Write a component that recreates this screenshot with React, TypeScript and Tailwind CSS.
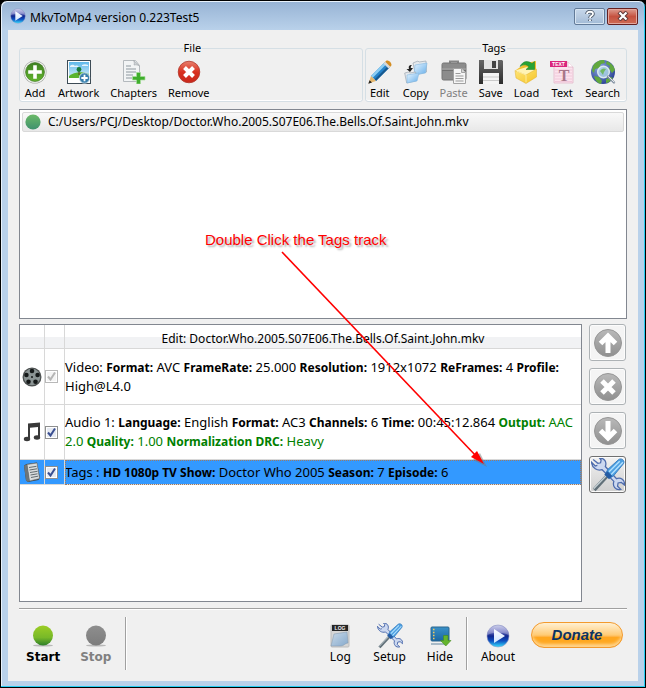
import { useState } from "react"
import type { ReactNode } from "react"

const MOVIE = "Doctor.Who.2005.S07E06.The.Bells.Of.Saint.John.mkv"

function LogoIcon({ size = 24 }: { size?: number }) {
  return (
    <svg width={size} height={size} viewBox="0 0 24 24" aria-hidden="true">
      <defs>
        <linearGradient id="logo" x1="0" y1="0" x2="0" y2="1">
          <stop offset="0" stopColor="#b9bde4" />
          <stop offset=".3" stopColor="#6a6fc0" />
          <stop offset=".5" stopColor="#11278e" />
          <stop offset=".72" stopColor="#0d4fc0" />
          <stop offset="1" stopColor="#35e0ff" />
        </linearGradient>
        <linearGradient id="logoPlay" x1="0" y1="0" x2="0" y2="1">
          <stop offset="0" stopColor="#fff" />
          <stop offset="1" stopColor="#cfe4ff" />
        </linearGradient>
      </defs>
      <circle cx="12" cy="12" r="11" fill="url(#logo)" stroke="#8f96c4" strokeWidth=".6" />
      <path d="M1.5 11C2 5 7 1.5 12 1.5S22 5 22.500 11C17 8 7 8 1.500 11Z" fill="#fff" opacity=".28" />
      <path d="M8 5v14L19 12Z" fill="url(#logoPlay)" />
    </svg>
  )
}

function AddIcon() {
  return (
    <svg width="24" height="24" viewBox="0 0 24 24" aria-hidden="true">
      <defs>
        <linearGradient id="add" x1="0" y1="0" x2="0" y2="1">
          <stop offset="0" stopColor="#3f8022" />
          <stop offset="1" stopColor="#62b52d" />
        </linearGradient>
      </defs>
      <circle cx="12" cy="12" r="11.500" fill="#a5a8a3" />
      <circle cx="12" cy="12" r="10.800" fill="#f5f7f4" />
      <circle cx="12" cy="12" r="9.500" fill="url(#add)" stroke="#3a6d20" strokeWidth=".6" />
      <path d="M10.200 5.200h3.600v5h5v3.600h-5v5h-3.600v-5h-5v-3.600h5Z" fill="#fff" />
    </svg>
  )
}

function ArtworkIcon() {
  return (
    <svg width="24" height="24" viewBox="0 0 24 24" aria-hidden="true">
      <defs>
        <linearGradient id="sky" x1="0" y1="0" x2="0" y2="1">
          <stop offset="0" stopColor="#5fb8ea" />
          <stop offset="1" stopColor="#d5f0fa" />
        </linearGradient>
      </defs>
      <rect x=".5" y=".5" width="23" height="23" fill="#fff" stroke="#3d4b55" />
      <rect x="2" y="2" width="20" height="16" fill="url(#sky)" />
      <path d="M3 6c2-2 4-1 5 0 2-1 3 0 4 1H3ZM15 5c2-1 4-1 6 0v1h-6Z" fill="#fff" opacity=".8" />
      <path d="M2 16c4-4 14-5 20-2v4H2Z" fill="#5ab42f" />
      <path d="M12 10v5" stroke="#5c4420" />
      <circle cx="12" cy="9.500" r="2.400" fill="#187c3a" />
      <circle cx="17.500" cy="18" r="5.200" fill="#397fac" stroke="#dcecf5" strokeWidth=".8" />
      <path d="M17.500 14.800v6.400M14.300 18h6.400" stroke="#fff" strokeWidth="1.800" />
    </svg>
  )
}

function ChaptersIcon() {
  return (
    <svg width="24" height="24" viewBox="0 0 24 24" aria-hidden="true">
      <path d="M1.500.500h12l4 5V21.500h-16Z" fill="#f2f4f5" stroke="#b4b9bd" />
      <path d="M11.500.500c1 2 1 3 .500 4.500 2-.500 4 0 5.500 1Z" fill="#cfd4d7" stroke="#9fa5a9" strokeWidth=".6" />
      <path d="M4 6h5M4 9h10M4 12h10M4 15h7M4 18h6" stroke="#8d989f" strokeWidth="1.200" />
      <path d="M14.500 12.500h4v4h4.500v3.500h-4.500v4h-4v-4h-4v-3.500h4Z" fill="#3fae2c" stroke="#a8dd9c" strokeWidth=".7" />
    </svg>
  )
}

function RemoveIcon() {
  return (
    <svg width="24" height="24" viewBox="0 0 24 24" aria-hidden="true">
      <defs>
        <linearGradient id="remove" x1="0" y1="0" x2="0" y2="1">
          <stop offset="0" stopColor="#e8816f" />
          <stop offset=".5" stopColor="#d8301f" />
          <stop offset="1" stopColor="#c9281b" />
        </linearGradient>
      </defs>
      <circle cx="12" cy="12" r="10.800" fill="url(#remove)" stroke="#b1392d" strokeWidth=".8" />
      <path d="m7.500 7.500 9 9m0-9-9 9" stroke="#fff" strokeWidth="4" />
    </svg>
  )
}

function EditIcon() {
  return (
    <svg width="24" height="24" viewBox="0 0 24 24" aria-hidden="true">
      <path d="M3 16 16.500 2.500l5 5L8 21Z" fill="#2583c9" />
      <path d="M3 16 16.500 2.500l1.800 1.800L4.800 17.800Z" fill="#8ccdf3" />
      <path d="m6.500 19.500 13.500-13.500 1.500 1.500L8 21Z" fill="#17598f" />
      <path d="m16.500 2.500 1.500-1.500c2-2 7 2.500 5 5l-1.500 1.500Z" fill="#d48d22" />
      <path d="m15.500 3.500 1.800-1.800 5 5-1.800 1.800Z" fill="#d5d8dc" />
      <path d="M3 16 .5 23.500 8 21Z" fill="#e5b86f" />
      <path d="m1.600 20.200-1.300 3.500 3.700-1.200Z" fill="#222" />
    </svg>
  )
}

function CopyIcon() {
  return (
    <svg width="24" height="24" viewBox="0 0 24 24" aria-hidden="true">
      <defs>
        <linearGradient id="copy" x1="0" y1="0" x2="1" y2="1">
          <stop offset="0" stopColor="#e8f5ff" />
          <stop offset="1" stopColor="#65aeea" />
        </linearGradient>
      </defs>
      <path d="m9 3 5-2 1 1 7-1 .500 11-11 3Z" fill="#e5e9ed" stroke="#9ca6b0" strokeWidth=".7" />
      <path d="m11 5 12-2-1.500 10L10 15Z" fill="url(#copy)" stroke="#85b9e0" strokeWidth=".6" />
      <path d="m.7 13 4-1 1 1 6-1v9l-9 2Z" fill="#e5e9ed" stroke="#9ca6b0" strokeWidth=".7" />
      <path d="m3 15 12-2-2 8-10 2Z" fill="url(#copy)" stroke="#85b9e0" strokeWidth=".6" />
      <path d="M8 5C4.500 5 4.500 7 5 9H2.500L6 12l3-4H6.800c0-1 0-2 1.200-3Z" fill="#222" />
    </svg>
  )
}

function PasteIcon() {
  return (
    <svg width="26" height="24" viewBox="0 0 26 24" aria-hidden="true">
      <path d="M9 4V1.500h8V4" fill="none" stroke="#858585" strokeWidth="2" />
      <rect x="1" y="3" width="24" height="17" rx="1.500" fill="#8c8c8c" stroke="#757575" />
      <path d="M1 9h24" stroke="#a9a9a9" />
      <path d="M1 10.500h24" stroke="#707070" />
      <path d="M12.500 8.500h8l4 4v11h-12Z" fill="#f6f6f6" stroke="#a2a2a2" />
      <path d="M20.500 8.500v4h4" fill="#d5d5d5" stroke="#a2a2a2" />
      <path d="M14.500 13.500h5M14.500 16h8M14.500 18.500h8M14.500 21h8" stroke="#999" />
    </svg>
  )
}

function SaveIcon() {
  return (
    <svg width="24" height="24" viewBox="0 0 24 24" aria-hidden="true">
      <defs>
        <linearGradient id="save" x1="0" y1="0" x2="0" y2="1">
          <stop offset="0" stopColor="#666" />
          <stop offset="1" stopColor="#2c2c2c" />
        </linearGradient>
      </defs>
      <path d="M0 0h23l1 1v23H0Z" fill="url(#save)" />
      <rect x="5" y="0" width="14" height="9" fill="#e3e3e3" />
      <rect x="13" y="1" width="4" height="7" fill="#444" />
      <rect x="4" y="13" width="16" height="11" fill="#f4f4f4" />
      <path d="M4 17h16M4 20.500h16" stroke="#c9c9c9" />
    </svg>
  )
}

function LoadIcon() {
  return (
    <svg width="24" height="24" viewBox="0 0 24 24" aria-hidden="true">
      <defs>
        <linearGradient id="load" x1="0" y1="0" x2="1" y2="1">
          <stop offset="0" stopColor="#ffe67a" />
          <stop offset="1" stopColor="#f5c426" />
        </linearGradient>
      </defs>
      <path d="M2 10 12 3l10-2v13l-9 8Z" fill="#f0c02c" />
      <path d="M1 10.500 13 7l9 3-3 9-7 3Z" fill="#fff3b5" />
      <path d="m1 10.500 11 4.500L22.500 9v8L12 23.500 2 18Z" fill="url(#load)" stroke="#e3b02c" strokeWidth=".5" />
      <path d="m3 11.300 9 3.700v7.500" fill="none" stroke="#fff3b0" strokeWidth=".8" />
      <path d="M6 6.500C9 .5 14 .5 18 3.500l2.500-2v8H12l3-2.800C12 4 9 4.500 6 6.500Z" fill="#27a334" stroke="#137824" strokeWidth=".5" />
    </svg>
  )
}

function TextIcon() {
  return (
    <svg width="24" height="24" viewBox="0 0 24 24" aria-hidden="true">
      <path d="M4 2h14l5 5v16H4Z" fill="#fbe3ed" stroke="#e3b6c9" strokeWidth=".8" />
      <path d="M5 10h17M5 13h17M5 16h17M5 19h17M5 21.500h17" stroke="#eec3d5" strokeWidth=".8" />
      <path d="M18 2v5h5" fill="#fff" stroke="#dcaec2" strokeWidth=".7" />
      <rect x="0" y="1" width="17" height="6" fill="#da257d" />
      <text x="8.500" y="6" textAnchor="middle" fontFamily="Liberation Sans" fontSize="5" fontWeight="700" fill="#fff">TEXT</text>
      <text x="14" y="21" textAnchor="middle" fontFamily="Liberation Serif" fontSize="16" fontWeight="700" fill="#a87689">T</text>
    </svg>
  )
}

function SearchIcon() {
  return (
    <svg width="26" height="26" viewBox="0 0 26 26" aria-hidden="true">
      <defs>
        <radialGradient id="globe" cx=".4" cy=".35" r=".7">
          <stop offset="0" stopColor="#8facdf" />
          <stop offset="1" stopColor="#263d91" />
        </radialGradient>
      </defs>
      <circle cx="13" cy="13" r="12" fill="url(#globe)" />
      <path d="M3 7c3-5 7-6 11-6l1 3-4 1-2 4-4 1-1 4-2-2ZM17 2c4 2 7 5 8 9l-3 3-3-4 1-3-4-2ZM4 17l5 1 3 4-1 3c-4-1-6-4-7-8ZM16 20l5-2 2 1c-2 3-5 5-7 5Z" fill="#61a83e" />
      <circle cx="13.500" cy="13" r="5.800" fill="#b4dbe9" fillOpacity=".75" stroke="#dbe9ef" strokeWidth="1.400" />
      <path d="M10 12c2-3 4-3 6-2l-2 3-1 3Z" fill="#72b867" />
      <path d="m18 17.500 6 6" stroke="#8492a2" strokeWidth="2.400" strokeLinecap="round" />
      <path d="m18.500 17.500 5.500 5.500" stroke="#e0e5ea" strokeLinecap="round" />
    </svg>
  )
}

function ToolsIcon({ size = 26 }: { size?: number }) {
  return (
    <svg width={size} height={size} viewBox="0 0 32 32" aria-hidden="true">
      <path
        d="M2 1.500 6.500 5 9 4.500 9.500 2 8 0c5 0 7 4 5.500 8L24 19.500c4-1.500 8 1 7.500 6L28.500 23l-3 .500-.500 3 3 3c-5 1-8-3-6.500-7.500L10.500 11C6 12.500 1 9.500.500 4L4 7.500l2-.500"
        fill="#ccd8f0"
        stroke="#4e6cad"
        strokeWidth="1.200"
      />
      <path d="M3 30 15.500 16.500" stroke="#617079" strokeWidth="3.500" />
      <path d="m2.500 29 12-12.500" stroke="#c5d0d4" strokeWidth="1.200" />
      <path d="m14 14 4.500 4.500 3-2 9-11c2-3-2-6-4.500-4l-10 9Z" fill="#4d9fe0" stroke="#2e77bd" strokeWidth=".8" />
      <path d="m17 13 10-10M19 15.500 30 4" stroke="#b3e1ff" strokeWidth="1.300" />
      <path d="m12.500 15.500 4.500 4.500 3-3-4.500-4.500Z" fill="#245ca4" />
    </svg>
  )
}

function LogIcon() {
  return (
    <svg width="24" height="24" viewBox="0 0 24 24" aria-hidden="true">
      <defs>
        <linearGradient id="log" x1="0" y1="0" x2="1" y2="1">
          <stop offset="0" stopColor="#c9d9e8" />
          <stop offset="1" stopColor="#86aacd" />
        </linearGradient>
      </defs>
      <rect x="3" y="1" width="18" height="22" rx="1" fill="#d6d6d6" stroke="#bcbcbc" />
      <rect x="4" y="1" width="16" height="6" fill="#262626" />
      <text x="12" y="6" textAnchor="middle" fontFamily="Liberation Sans" fontSize="5" fontWeight="700" fill="#eee">LOG</text>
      <path d="m6 10 13-2 1 11c-3 0-4 3-7 3H3Z" fill="url(#log)" stroke="#8097ad" strokeWidth=".5" />
    </svg>
  )
}

function HideIcon() {
  return (
    <svg width="24" height="24" viewBox="0 0 24 24" aria-hidden="true">
      <defs>
        <linearGradient id="hide" x1="0" y1="0" x2="0" y2="1">
          <stop offset="0" stopColor="#3a91c8" />
          <stop offset="1" stopColor="#1b66a1" />
        </linearGradient>
      </defs>
      <rect x="3" y="3" width="18" height="14" rx="1" fill="url(#hide)" stroke="#2a668f" />
      <path d="M5 5.500h1.500M5 8.500h1.500M5 11.500h1.500M5 14.500h1.500" stroke="#f5c95c" strokeWidth="1.400" />
      <path d="M3 20h15" stroke="#a8bac7" strokeWidth="2" />
      <path d="M15.500 11.500h4.500v5h3L17.800 22l-5.300-5.500h3Z" fill="#64b42c" stroke="#438b1b" strokeWidth=".6" />
    </svg>
  )
}

function BallIcon({ on }: { on: boolean }) {
  return (
    <svg width="24" height="22" viewBox="0 0 24 22" aria-hidden="true">
      <defs>
        <linearGradient id="ballOn" x1="0" y1="0" x2="0" y2="1">
          <stop offset="0" stopColor="#9ccd25" />
          <stop offset=".6" stopColor="#78b928" />
          <stop offset="1" stopColor="#2e7e2a" />
        </linearGradient>
        <linearGradient id="ballOff" x1="0" y1="0" x2="0" y2="1">
          <stop offset="0" stopColor="#8e8e8e" />
          <stop offset="1" stopColor="#7c7c7c" />
        </linearGradient>
      </defs>
      <ellipse cx="12" cy="20.500" rx="10" ry="1" fill="#b9b9b9" />
      <circle cx="12" cy="10.500" r="10" fill={on ? "url(#ballOn)" : "url(#ballOff)"} />
    </svg>
  )
}

function ReelIcon() {
  return (
    <svg width="20" height="20" viewBox="0 0 20 20" aria-hidden="true">
      <circle cx="10" cy="10" r="9.500" fill="#4c5050" />
      <circle cx="10" cy="10" r="8.200" fill="#8b9494" />
      <g fill="#151919">
        <circle cx="10" cy="4" r="2.300" />
        <circle cx="15.600" cy="8" r="2.300" />
        <circle cx="13.500" cy="14.700" r="2.300" />
        <circle cx="6.500" cy="14.700" r="2.300" />
        <circle cx="4.400" cy="8" r="2.300" />
        <circle cx="10" cy="10" r="1" />
      </g>
    </svg>
  )
}

function NoteIcon() {
  return (
    <svg width="18" height="20" viewBox="0 0 18 20" aria-hidden="true">
      <path d="M5 1.500 17 .5v15h-2V5L7 5.800V17.500H5Z" fill="#393939" />
      <ellipse cx="4" cy="17" rx="3.200" ry="2.200" fill="#393939" />
      <ellipse cx="14" cy="15.500" rx="3.200" ry="2.200" fill="#393939" />
    </svg>
  )
}

function TagsIcon() {
  return (
    <svg width="18" height="20" viewBox="0 0 18 20" aria-hidden="true">
      <path d="M1 3.500 3.500 2 14 .5l3 15.500-1.500 2L5 20l-2-1.500Z" fill="#3b4246" />
      <path d="m4 2.500 10-1.500L16.500 16.500 6.500 19Z" fill="#d9dcdd" stroke="#6e7679" strokeWidth=".6" />
      <path d="m6 5.500 7.500-1.200M6.500 8l7.500-1.200M7 10.500l7.500-1.200M7.500 13l7-1.200M8 15.500l7-1.300" stroke="#646c70" />
      <path d="M1 3.500 4 2.500 6.500 19 5 20l-2-1.500Z" fill="#6d7579" />
    </svg>
  )
}

function RoundIcon({ path }: { path: string }) {
  return (
    <svg width="30" height="30" viewBox="0 0 30 30" aria-hidden="true">
      <defs>
        <linearGradient id="round" x1="0" y1="0" x2="0" y2="1">
          <stop offset="0" stopColor="#b9b9b9" />
          <stop offset="1" stopColor="#8f8f8f" />
        </linearGradient>
      </defs>
      <circle cx="15" cy="15" r="13.500" fill="url(#round)" stroke="#969696" />
      <path d={path} fill="none" stroke="#fff" strokeWidth="5" />
    </svg>
  )
}

function ToolButton({ icon, label, disabled }: { icon: ReactNode; label: string; disabled?: boolean }) {
  return (
    <button type="button" disabled={disabled} className="flex flex-col items-center text-black disabled:text-[#808080]">
      <span className="flex h-[26px] items-center">{icon}</span>
      <span className="leading-[16px]">{label}</span>
    </button>
  )
}

function Group({ title, className, children }: { title: string; className: string; children: ReactNode }) {
  return (
    <fieldset className={`min-w-0 rounded-[3px] border border-[#d5dfe5] text-[11px] shadow-[inset_0_-1px_0_#fff] ${className}`}>
      <legend className="mx-auto px-px leading-[14px]">{title}</legend>
      <div className="flex gap-[11px] pt-1">{children}</div>
    </fieldset>
  )
}

function Check({ label, checked, disabled, onChange }: { label: string; checked: boolean; disabled?: boolean; onChange: () => void }) {
  return (
    <label className="grid size-[13px] bg-white">
      <input
        type="checkbox"
        aria-label={label}
        checked={checked}
        disabled={disabled}
        onChange={onChange}
        className="peer col-start-1 row-start-1 size-[13px] appearance-none border border-[#8e8f8f] bg-[#e6eaf2] shadow-[inset_0_0_0_1px_#fff] disabled:border-[#b8b8b8] disabled:bg-[#f4f4f4]"
      />
      <svg
        viewBox="0 0 13 13"
        className="pointer-events-none col-start-1 row-start-1 hidden size-[13px] text-[#3a4f91] peer-checked:block peer-disabled:text-[#b5b5b5]"
        aria-hidden="true"
      >
        <path d="m3 6.500 2.500 3 4.500-7" fill="none" stroke="currentColor" strokeWidth="2" />
      </svg>
    </label>
  )
}

function Field({ children }: { children: ReactNode }) {
  return <b className="text-[12px]">{children}</b>
}

export default function App() {
  const [tracks, setTracks] = useState([true, true, true])
  const toggle = (index: number) => setTracks(tracks.map((on, i) => (i === index ? !on : on)))

  const sideButtons = [
    { label: "Move up", path: "M15 25V8M7.500 15.500 15 8l7.500 7.500" },
    { label: "Remove track", path: "m9 9 12 12M21 9 9 21" },
    { label: "Move down", path: "M15 5v17M7.500 14.500 15 22l7.500-7.500" },
  ]

  const cell = "border-b border-[#d8d8d8] p-0"

  return (
    <div className="bg-black font-['Noto_Sans','Open_Sans',sans-serif] text-[12px] text-black">
      <div className="relative flex min-h-screen flex-col rounded-t-[7px] border border-black bg-[#b9d1ea] px-[7px] pb-[6px] shadow-[inset_-1px_-1px_0_#27cdf2,inset_1px_1px_0_#e9f2fb]">
        {/* Title bar */}
        <header className="-mx-[6px] mt-px flex h-[28px] items-center rounded-t-[6px] bg-gradient-to-b from-[#98b4d5] to-[#b9d1ea] pl-[8px] pr-[6px]">
          <LogoIcon size={16} />
          <h1 className="ml-[4px] flex-1 pt-[4px] text-[12px] leading-[18px]">MkvToMp4 version 0.223Test5</h1>
          <button type="button" aria-label="Help" className="mr-[2px] flex h-[17px] w-[31px] items-center justify-center rounded-[2px] border border-[#627a98] bg-gradient-to-b from-[#c6d7ea] via-[#b7cae0] to-[#a1bad6] shadow-[inset_0_0_0_1px_#d8e5f2]">
            <svg width="10" height="12" viewBox="0 0 10 12" aria-hidden="true">
              <g fill="none" strokeLinejoin="round">
                <path d="M2 4c0-3 6-3 6 0 0 2-3 1.500-3 4M5 9.500v1.500" stroke="#4b5767" strokeWidth="3.600" />
                <path d="M2 4c0-3 6-3 6 0 0 2-3 1.500-3 4M5 9.500v1.500" stroke="#fff" strokeWidth="1.800" />
              </g>
            </svg>
          </button>
          <button type="button" aria-label="Close" className="flex h-[17px] w-[31px] items-center justify-center rounded-[2px] border border-[#652020] bg-gradient-to-b from-[#dc9c90] via-[#c5513f] to-[#ce6b55] shadow-[inset_0_0_0_1px_#e3a79d]">
            <svg width="12" height="10" viewBox="0 0 12 10" aria-hidden="true">
              <path d="m2 1 8 8m0-8-8 8" stroke="#5e3838" strokeWidth="4.200" />
              <path d="m2.500 1.500 7 7m0-7-7 7" stroke="#fff" strokeWidth="2.200" />
            </svg>
          </button>
        </header>

        <main className="flex flex-1 flex-col bg-[#f0f0f0] px-[11px] pt-[11px] pb-[11px]">
          {/* Toolbar */}
          <div className="flex gap-[2px]">
            <Group title="File" className="flex-1 pl-[3px]">
              <ToolButton icon={<AddIcon />} label="Add" />
              <ToolButton icon={<ArtworkIcon />} label="Artwork" />
              <ToolButton icon={<ChaptersIcon />} label="Chapters" />
              <ToolButton icon={<RemoveIcon />} label="Remove" />
            </Group>
            <Group title="Tags" className="pl-[2px] pr-[6px]">
              <ToolButton icon={<EditIcon />} label="Edit" />
              <ToolButton icon={<CopyIcon />} label="Copy" />
              <ToolButton icon={<PasteIcon />} label="Paste" disabled />
              <ToolButton icon={<SaveIcon />} label="Save" />
              <ToolButton icon={<LoadIcon />} label="Load" />
              <ToolButton icon={<TextIcon />} label="Text" />
              <ToolButton icon={<SearchIcon />} label="Search" />
            </Group>
          </div>

          {/* Queue */}
          <ul className="mt-[7px] h-[210px] border border-[#828790] bg-white p-[2px]">
            <li className="flex h-[20px] items-center gap-[6px] rounded-[2px] border border-[#d9d9d9] bg-gradient-to-b from-[#f9f9f9] to-[#e8e8e8] pl-px">
              <svg width="18" height="16" viewBox="0 0 18 16" aria-hidden="true">
                <defs>
                  <linearGradient id="queued" x1="0" y1="0" x2="0" y2="1">
                    <stop offset="0" stopColor="#6cba67" />
                    <stop offset="1" stopColor="#3f916e" />
                  </linearGradient>
                </defs>
                <circle cx="9" cy="8" r="7.600" fill="url(#queued)" />
              </svg>
              C:/Users/PCJ/Desktop/{MOVIE}
            </li>
          </ul>

          {/* Tracks */}
          <div className="mt-[5px] flex flex-1 gap-[7px]">
            <div className="flex-1 border border-[#828790] bg-white">
              <table className="w-full table-fixed border-separate border-spacing-0 text-left text-[13px] leading-[18px]">
                <colgroup>
                  <col className="w-[25px]" />
                  <col className="w-[20px]" />
                  <col />
                </colgroup>
                <thead>
                  <tr className="h-[24px] bg-gradient-to-b from-white from-50% to-[#f1f2f4] to-50% text-[12px]">
                    <th className={`${cell} border-r`} aria-label="Type" />
                    <th className={`${cell} border-r`} aria-label="Enabled" />
                    <th className={`${cell} pt-[4px] text-center font-normal`}>Edit: {MOVIE}</th>
                  </tr>
                </thead>
                <tbody>
                  <tr className="h-[56px]">
                    <td className={`${cell} border-r pl-[2px]`}><ReelIcon /></td>
                    <td className={`${cell} border-r`}><Check label="Video" checked={tracks[0]} disabled onChange={() => toggle(0)} /></td>
                    <td className={cell}>
                      Video: <Field>Format:</Field> AVC <Field>FrameRate:</Field> 25.000 <Field>Resolution:</Field> 1912x1072 <Field>ReFrames:</Field> 4 <Field>Profile:</Field> High@L4.0
                    </td>
                  </tr>
                  <tr className="h-[55px]">
                    <td className={`${cell} border-r pl-[3px]`}><NoteIcon /></td>
                    <td className={`${cell} border-r`}><Check label="Audio 1" checked={tracks[1]} onChange={() => toggle(1)} /></td>
                    <td className={cell}>
                      Audio 1: <Field>Language:</Field> English <Field>Format:</Field> AC3 <Field>Channels:</Field> 6 <Field>Time:</Field> 00:45:12.864{" "}
                      <span className="text-[#008000]">
                        <Field>Output:</Field> AAC 2.0 <Field>Quality:</Field> 1.00 <Field>Normalization DRC:</Field> Heavy
                      </span>
                    </td>
                  </tr>
                  <tr className="h-[25px] bg-[#3399ff]">
                    <td className={`${cell} border-r pl-[3px]`}><TagsIcon /></td>
                    <td className={`${cell} border-r`}><Check label="Tags" checked={tracks[2]} onChange={() => toggle(2)} /></td>
                    <td className="border-b border-[#d8d8d8] p-0 outline-1 -outline-offset-1 outline-dotted outline-[#a07a60]">
                      Tags : <Field>HD 1080p TV Show:</Field> Doctor Who 2005 <Field>Season:</Field> 7 <Field>Episode:</Field> 6
                    </td>
                  </tr>
                </tbody>
              </table>
            </div>

            <div className="flex flex-col gap-[7px] pr-px">
              {sideButtons.map((button) => (
                <button
                  key={button.label}
                  type="button"
                  disabled
                  aria-label={button.label}
                  className="flex size-[37px] items-center justify-center rounded-[3px] border border-[#adb2b5] bg-[#f4f4f4] shadow-[inset_0_0_0_1px_#fcfcfc]"
                >
                  <RoundIcon path={button.path} />
                </button>
              ))}
              <button
                type="button"
                aria-label="Track settings"
                className="flex size-[37px] items-center justify-center rounded-[3px] border border-[#707070] bg-gradient-to-b from-[#f2f2f2] to-[#cfcfcf] shadow-[inset_0_0_0_1px_#fcfcfc]"
              >
                <ToolsIcon size={34} />
              </button>
            </div>
          </div>

          {/* Bottom bar */}
          <footer className="mt-[6px] flex items-start border-t border-[#a0a0a0] pt-[8px] shadow-[inset_0_1px_0_#fff]">
            <div className="flex h-[53px] flex-1 gap-[20px] pt-[6px] pl-[7px] font-['DejaVu_Sans','Noto_Sans',sans-serif] font-bold">
              <ToolButton icon={<BallIcon on />} label="Start" />
              <ToolButton icon={<BallIcon on={false} />} label="Stop" disabled />
              <div className="-mt-[6px] -ml-[6px] w-[2px] border-l border-[#a0a0a0] bg-white" />
            </div>
            <div className="flex h-[53px] gap-[21px] pt-[6px]">
              <ToolButton icon={<LogIcon />} label="Log" />
              <ToolButton icon={<ToolsIcon size={26} />} label="Setup" />
              <ToolButton icon={<HideIcon />} label="Hide" />
            </div>
            <div className="mr-[13px] ml-[13px] h-[53px] w-[2px] border-l border-[#a0a0a0] bg-white" />
            <div className="flex h-[53px] pt-[6px]">
              <ToolButton icon={<LogoIcon />} label="About" />
            </div>
            <button
              type="button"
              className="mt-[5px] mr-[4px] ml-[16px] h-[26px] w-[92px] rounded-full border border-[#f39a2d] bg-gradient-to-b from-[#fff0d2] via-[#ffcb74] via-50% to-[#ffa71f] to-60% font-['Liberation_Sans',sans-serif] text-[15px] leading-[22px] font-bold text-[#0c3463] italic shadow-[inset_0_-3px_3px_#ffd38a]"
            >
              Donate
            </button>
          </footer>
        </main>

        {/* Callout drawn over the window */}
        <p className="pointer-events-none absolute top-[230px] left-[204px] font-['Liberation_Sans',sans-serif] text-[15px] leading-[18px] text-[#ff0000] [text-shadow:2px_2px_2px_#aaa]">
          Double Click the Tags track
        </p>
        <svg className="pointer-events-none absolute top-[250px] left-[280px]" width="212" height="222" viewBox="0 0 212 222" aria-hidden="true">
          <path d="M1 1 196 206" stroke="#f00" strokeWidth="1.600" />
          <path d="m206 216-14-7 7-7Z" fill="#777" opacity=".5" />
          <path d="m203 213-13-7 6-6Z" fill="#f00" />
        </svg>
      </div>
    </div>
  )
}
